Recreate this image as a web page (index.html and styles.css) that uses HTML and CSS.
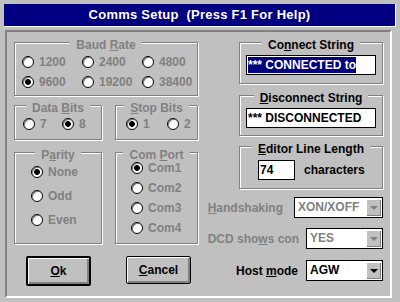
FILE: index.html
```html
<!DOCTYPE html>
<html lang="en">
<head>
  <meta charset="UTF-8">
  <title>Comms Setup</title>
  <link rel="stylesheet" href="styles.css">
</head>
<body>

  <div class="titlebar">Comms Setup&nbsp; (Press F1 For Help)</div>

  <div class="panel">
    <div class="col-left">
      <div class="group baud dis">
        <div class="legend">Baud <u>R</u>ate</div>
        <div class="baud-grid">
          <div class="opt"><span class="radio"></span>1200</div>
          <div class="opt"><span class="radio"></span>2400</div>
          <div class="opt"><span class="radio"></span>4800</div>
          <div class="opt"><span class="radio on"></span>9600</div>
          <div class="opt"><span class="radio"></span>19200</div>
          <div class="opt"><span class="radio"></span>38400</div>
        </div>
      </div>

      <div class="pair pair-bits">
        <div class="group data dis">
          <div class="legend">Data <u>B</u>its</div>
          <div class="bits-row">
            <div class="opt"><span class="radio"></span>7</div>
            <div class="opt"><span class="radio on"></span>8</div>
          </div>
        </div>
        <div class="group stop dis">
          <div class="legend"><u>S</u>top Bits</div>
          <div class="bits-row">
            <div class="opt"><span class="radio on"></span>1</div>
            <div class="opt"><span class="radio"></span>2</div>
          </div>
        </div>
      </div>

      <div class="pair pair-lists">
        <div class="group parity dis">
          <div class="legend">P<u>a</u>rity</div>
          <div class="list">
            <div class="opt"><span class="radio on"></span>None</div>
            <div class="opt"><span class="radio"></span>Odd</div>
            <div class="opt"><span class="radio"></span>Even</div>
          </div>
        </div>
        <div class="group com dis">
          <div class="legend">Com <u>P</u>ort</div>
          <div class="list">
            <div class="opt"><span class="radio on"></span>Com1</div>
            <div class="opt"><span class="radio"></span>Com2</div>
            <div class="opt"><span class="radio"></span>Com3</div>
            <div class="opt"><span class="radio"></span>Com4</div>
          </div>
        </div>
      </div>

      <div class="buttons">
        <div class="btn default"><span><u>O</u>k</span></div>
        <div class="btn cancel"><span><u>C</u>ancel</span></div>
      </div>
    </div>

    <div class="col-right">
      <div class="group conn">
        <div class="legend">Co<u>n</u>nect String</div>
        <div class="field wide"><span class="sel">*** CONNECTED to</span></div>
      </div>
      <div class="group disc">
        <div class="legend"><u>D</u>isconnect String</div>
        <div class="field wide">*** DISCONNECTED</div>
      </div>
      <div class="group editor">
        <div class="legend"><u>E</u>ditor Line Length</div>
        <div class="edit-row">
          <div class="field short">74</div>
          <span>characters</span>
        </div>
      </div>

      <div class="combo-row hand dis">
        <span class="lbl"><u>H</u>andshaking</span>
        <div class="combo long"><span class="val">XON/XOFF</span><span class="arrow"></span></div>
      </div>
      <div class="combo-row dcd dis">
        <span class="lbl">DCD sho<u>w</u>s con</span>
        <div class="combo"><span class="val">YES</span><span class="arrow"></span></div>
      </div>
      <div class="combo-row host">
        <span class="lbl">Host <u>m</u>ode</span>
        <div class="combo"><span class="val">AGW</span><span class="arrow"></span></div>
      </div>
    </div>
  </div>

</body>
</html>
```

FILE: styles.css
```css
* {
  box-sizing: border-box;
}
body {
  margin: 0;
  width: 400px;
  height: 302px;
  overflow: hidden;
  background: #c0c0c0;
  color: #000;
  font: bold 12px "Liberation Sans", Arial, sans-serif;
}
u {
  text-underline-offset: 1px;
}
.dis {
  color: #808080;
}

/* title bar */
.titlebar {
  margin: 4px 4px 0 4px;
  height: 23px;
  background: #000080;
  color: #fff;
  border-bottom: 1px solid #fff;
  border-right: 1px solid #fff;
  text-align: center;
  font-size: 13px;
  line-height: 22px;
  letter-spacing: 0.25px;
}

/* sunken panel */
.panel {
  display: flex;
  gap: 12px;
  width: 387px;
  height: 268px;
  margin: 3px 0 0 5px;
  padding-left: 7px;
  border: 2px solid;
  border-color: #808080 #fff #fff #808080;
}
.col-left {
  width: 184px;
  padding-top: 10px;
}
.col-right {
  width: 173px;
  padding-top: 10px;
}

/* etched group boxes */
.group {
  border: 1px solid #808080;
  box-shadow: 1px 1px 0 #fff, inset 1px 1px 0 #fff;
}
.legend {
  display: table;
  margin: -5px auto 0;
  padding: 0 6px;
  background: #c0c0c0;
  line-height: 14px;
}
.opt {
  display: flex;
  align-items: center;
  gap: 5px;
  white-space: nowrap;
}
.radio {
  flex: none;
  width: 12px;
  height: 12px;
  border: 1px solid #000;
  border-radius: 50%;
  background: #fff;
  box-shadow: inset 1px 1px 0 #808080;
}
.radio.on {
  background: radial-gradient(circle, #000 2.6px, #fff 3.2px);
}

.baud {
  height: 54px;
}
.baud-grid {
  display: grid;
  grid-template-columns: repeat(3, 60px);
  grid-auto-rows: 20px;
  padding-left: 7px;
}

.pair {
  display: flex;
  gap: 13px;
}
.pair-bits {
  margin-top: 9px;
}
.pair-lists {
  margin-top: 12px;
}
.data,
.parity {
  width: 88px;
}
.stop,
.com {
  width: 83px;
}
.data,
.stop {
  height: 35px;
}
.bits-row {
  display: grid;
  height: 17px;
}
.data .bits-row {
  grid-template-columns: 39px auto;
  padding-left: 8px;
}
.stop .bits-row {
  grid-template-columns: 41px auto;
  padding-left: 10px;
}

.parity,
.com {
  height: 92px;
}
.list {
  display: flex;
  flex-direction: column;
  gap: 4px;
  padding-left: 16px;
}
.list .opt {
  height: 20px;
}
.com .legend {
  margin-bottom: -4px;
}
.com .list {
  gap: 0;
  padding-left: 15px;
}

/* push buttons */
.buttons {
  display: flex;
  align-items: flex-start;
  gap: 35px;
  margin-top: 12px;
  padding-left: 12px;
}
.btn {
  display: flex;
  align-items: center;
  justify-content: center;
  width: 65px;
  height: 28px;
  border: 1px solid #000;
  border-radius: 2px;
  box-shadow: inset 1px 1px 0 #fff, inset -2px -2px 0 #808080;
}
.btn.default {
  height: 30px;
  border-width: 2px;
}

/* right side */
.conn {
  height: 42px;
}
.conn,
.disc,
.editor {
  margin-left: 29px;
}
.disc {
  height: 41px;
  margin-top: 11px;
}
.editor {
  height: 43px;
  margin-top: 10px;
}
.field {
  height: 20px;
  border: 1px solid #000;
  background: #fff;
  color: #000;
  line-height: 18px;
  padding-left: 1px;
  white-space: nowrap;
  overflow: hidden;
}
.field.wide {
  width: 130px;
  margin: 3px 0 0 6px;
}
.sel {
  background: #000080;
  color: #fff;
  padding: 1px 0;
}
.edit-row {
  display: flex;
  align-items: center;
  gap: 9px;
  margin: 4px 0 0 18px;
}
.field.short {
  width: 37px;
}

.combo-row {
  display: flex;
  align-items: center;
  justify-content: flex-end;
  gap: 8px;
}
.lbl {
  flex: none;
  white-space: nowrap;
}
.hand {
  gap: 11px;
  margin-top: 8px;
}
.dcd {
  gap: 7px;
  margin-top: 10px;
}
.host {
  margin-top: 11px;
}
.combo {
  flex: none;
  display: flex;
  width: 77px;
  height: 21px;
  padding: 1px;
  border: 1px solid #000;
  background: #fff;
}
.combo.long {
  width: 89px;
}
.val {
  flex: 1;
  padding-left: 2px;
  line-height: 17px;
}
.arrow {
  display: flex;
  align-items: center;
  justify-content: center;
  width: 15px;
  background: #c0c0c0;
  box-shadow: inset 1px 1px 0 #fff, inset -1px -1px 0 #808080;
}
.arrow::after {
  content: "";
  border-left: 4px solid transparent;
  border-right: 4px solid transparent;
  border-top: 4px solid #000;
}
.dis .arrow::after {
  border-top-color: #808080;
}
```
